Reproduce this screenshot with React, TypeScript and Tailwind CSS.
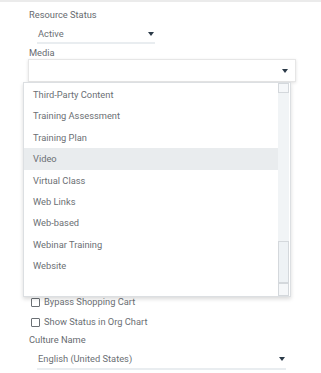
import React from 'react';

const mediaOptions = [
  'Third-Party Content',
  'Training Assessment',
  'Training Plan',
  'Video',
  'Virtual Class',
  'Web Links',
  'Web-based',
  'Webinar Training',
  'Website',
];

const Caret: React.FC = () => (
  <svg width="6" height="4" viewBox="0 0 6 4" className="shrink-0">
    <path d="M0 0 H6 L3 4 Z" fill="#2b3a48" />
  </svg>
);

const Checkbox: React.FC<{ label: string }> = ({ label }) => (
  <label className="flex items-center h-[20px] pl-[31px]">
    <span className="w-[9px] h-[9px] border border-[#6b7075] rounded-[1px] bg-white" />
    <span className="ml-[4px] text-[9.3px] text-[#6b6f74]">{label}</span>
  </label>
);

const App: React.FC = () => {
  const selected = 'Video';

  return (
    <div className="w-[321px] h-[373px] bg-white overflow-hidden font-['Roboto',sans-serif] leading-none">
      <div className="h-[2px] bg-[#ebebeb]" />

      {/* Resource Status */}
      <div className="pl-[29px] pt-[8px] h-[19px] text-[9.3px] text-[#676b70]">Resource Status</div>
      <div className="ml-[37px] mt-[4px] w-[118px] h-[19px] flex items-center justify-between border-b-2 border-[#e9edf0] pl-[1px] pr-[1px]">
        <span className="text-[9.3px] text-[#6b6f74]">Active</span>
        <Caret />
      </div>

      {/* Media */}
      <div className="pl-[29px] pt-[4px] h-[14px] text-[9.3px] text-[#676b70]">Media</div>
      <div className="relative">
        <div className="ml-[28px] mt-[1px] w-[268px] h-[23px] flex items-end justify-end pb-[8px] pr-[7px] border border-[#e6e6e6] shadow-[0_1px_3px_rgba(0,0,0,0.12)] bg-white">
          <Caret />
        </div>

        {/* open options list */}
        <div className="absolute left-[23px] top-[23px] w-[268px] h-[215px] bg-white border border-[#dcdfe2] shadow-[0_2px_4px_rgba(0,0,0,0.15)] flex z-10">
          <ul className="flex-1 pt-[1px]">
            {mediaOptions.map((opt) => (
              <li
                key={opt}
                className={`h-[21.4px] flex items-center pl-[9px] text-[9.3px] text-[#6b6f74] ${
                  opt === selected ? 'bg-[#e9ecee]' : ''
                }`}
              >
                {opt}
              </li>
            ))}
          </ul>
          <div className="w-[11px] mr-[1px] flex flex-col bg-[#f1f4f6]">
            <div className="h-[10px] border border-[#d4d8dc] bg-[#f5f7f9]" />
            <div className="flex-1" />
            <div className="h-[42px] border border-[#d4d8dc] bg-[#eef2f5]" />
            <div className="h-[13px] border border-[#d4d8dc] bg-[#f5f7f9]" />
          </div>
        </div>
      </div>

      {/* fields below the open list */}
      <div className="mt-[210px]">
        <Checkbox label="Bypass Shopping Cart" />
        <Checkbox label="Show Status in Org Chart" />
        <div className="pl-[29px] pt-[3px] h-[13px] text-[9.3px] text-[#676b70]">Culture Name</div>
        <div className="ml-[37px] mt-[4px] w-[249px] h-[21px] flex items-center justify-between border-b-2 border-[#e9edf0] pl-[1px] pr-[1px]">
          <span className="text-[9.3px] text-[#6b6f74]">English (United States)</span>
          <Caret />
        </div>
      </div>
    </div>
  );
};

export default App;
